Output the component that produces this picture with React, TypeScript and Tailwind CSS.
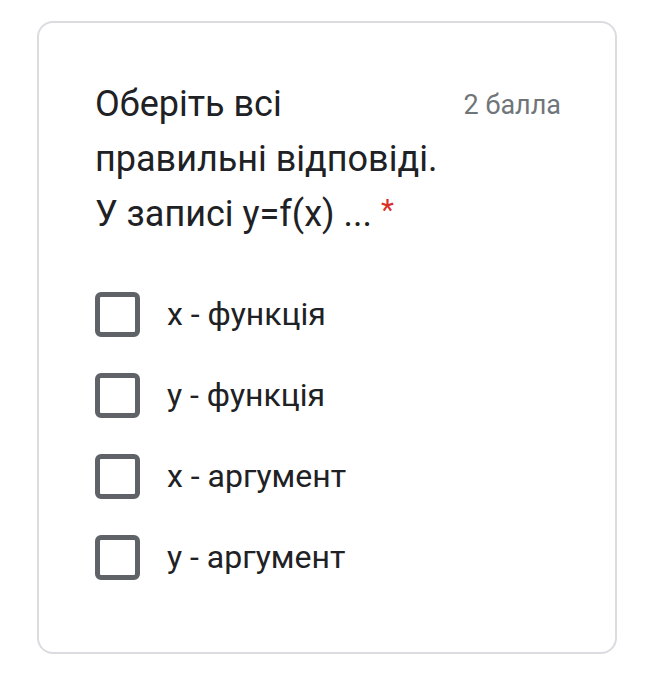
const options = ["x - функція", "y - функція", "x - аргумент", "y - аргумент"];

function Checkbox() {
  return <span className="block h-[45px] w-[45px] shrink-0 rounded-[6px] border-[5px] border-[#5f6368]" />;
}

export default function App() {
  return (
    <div className="min-h-[676px] bg-white pl-[37px] pt-[21px] font-['Roboto',sans-serif]">
      <div className="h-[633px] w-[580px] rounded-[16px] border-2 border-[#dadce0] bg-white pl-[56px] pr-[54px] pt-[54px]">
        <div className="flex items-start justify-between">
          <h2 className="text-[36px] leading-[55px] text-[#202124]">
            Оберіть всі
            <br />
            правильні відповіді.
            <br />
            У записі y=f(x) ...{" "}
            <span className="relative top-[-6px] text-[30px] text-[#d93025]">*</span>
          </h2>
          <span className="pt-[12px] text-[27px] leading-[32px] text-[#70757a]">2 балла</span>
        </div>
        <div className="mt-[49px] flex flex-col gap-[36px]">
          {options.map((o) => (
            <label key={o} className="flex items-center gap-[27px]">
              <Checkbox />
              <span className="text-[32px] leading-[45px] text-[#202124]">{o}</span>
            </label>
          ))}
        </div>
      </div>
    </div>
  );
}
